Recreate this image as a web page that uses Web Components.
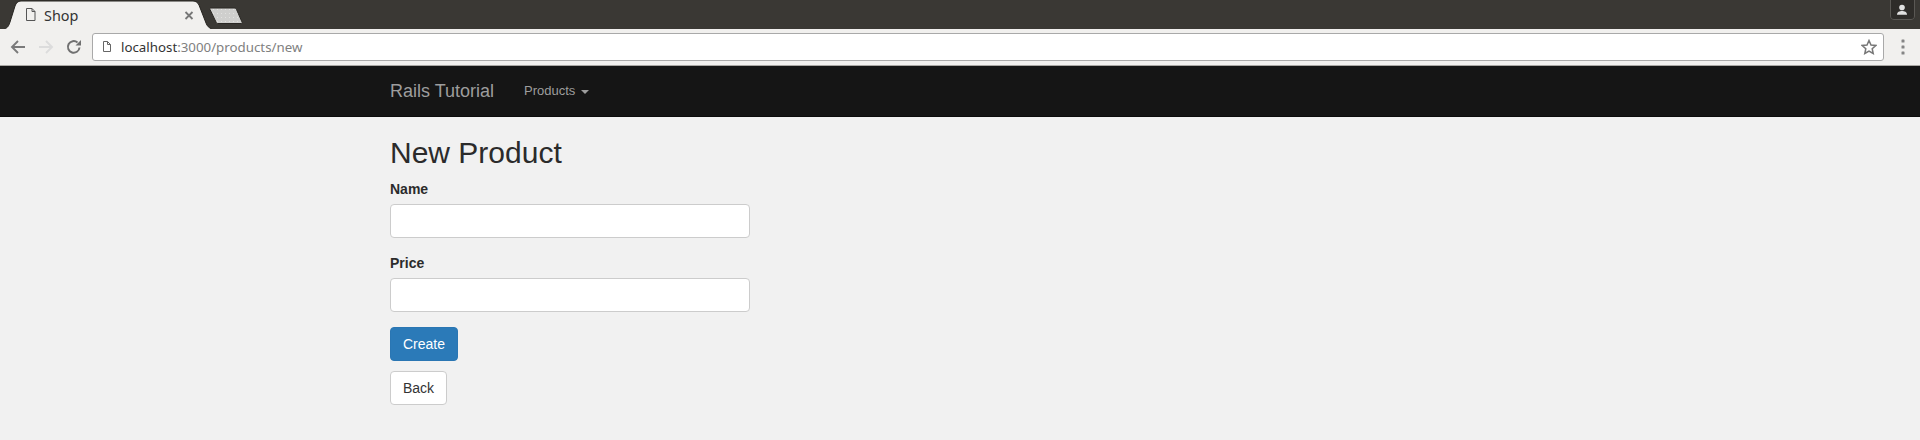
<!DOCTYPE html>
<html><head><meta charset="utf-8">
<style>
html,body{margin:0;padding:0;background:#f1f1f1;}
body{width:1920px;height:440px;overflow:hidden;font-family:"Liberation Sans",Arial,sans-serif;font-size:14px;color:#333;line-height:20px}
</style></head>
<body>
<browser-chrome></browser-chrome>
<site-navbar></site-navbar>
<product-page></product-page>
<script>
function mk(tag,html){customElements.define(tag,class extends HTMLElement{constructor(){super();this.attachShadow({mode:'open'}).innerHTML=html;}});}
mk('browser-chrome',`<style>
:host{display:block;font-family:"Noto Sans","Open Sans",sans-serif}
.tabs{height:29px;background:#3a3834;position:relative}
.tabshape{position:absolute;left:0;top:0}
.title{position:absolute;left:44px;top:5px;font:14.4px/22px "Noto Sans",sans-serif;color:#333}
.toolbar{height:37px;background:#f1f0ee;border-bottom:1px solid #a9a7a3;box-sizing:border-box;display:flex;align-items:center;padding-left:10px}
.url{margin-left:10px;width:1792px;height:28px;box-sizing:border-box;background:#fff;border:1px solid #a9a9a9;border-radius:3px;display:flex;align-items:center;padding-left:9px;font:13.3px/20px "Noto Sans",sans-serif;color:#333}
.url span{color:#808080}
.text{margin-left:9px;white-space:nowrap}
.star{margin-left:auto;margin-right:6px}
.menu{margin-left:17px}
svg{display:block;flex:none}
</style>
<div class="tabs">
<svg class="tabshape" width="250" height="29" viewBox="0 0 250 29">
<defs><pattern id="dots" width="4" height="4" patternUnits="userSpaceOnUse"><rect width="4" height="4" fill="#cfcfcd"/><rect x="1" y="1" width="1" height="1" fill="#e2e2e0"/></pattern></defs>
<path d="M4 29C8 28 9 25 10 22L15 6C16 3 18 1 21 1H193C196 1 198 3 199 5L206 23C207 26 209 28 212 29Z" fill="#f1f0ee"/>
<path d="M4 29C8 28 9 25 10 22L15 6C16 3 18 1 21 1H193C196 1 198 3 199 5L206 23C207 26 209 28 212 29" fill="none" stroke="#25231f"/>
<path d="M211 8H234C235.500 8 236 8.500 236.500 9.500L242 22C242.500 23 242 23.500 241 23.500H218C217 23.500 216.500 23 216 22L210 9.500C209.500 8.500 210 8 211 8Z" fill="url(#dots)" stroke="#2a2824"/>
<path d="M26.500 8.500h5.500l3 3v9h-8.500zM32 8.500v3h3" fill="none" stroke="#555"/>
<path d="M185.500 12l7 7M192.500 12l-7 7" stroke="#777" stroke-width="1.800" fill="none"/>
</svg>
<span class="title">Shop</span>
<svg style="position:absolute;left:1890px;top:0" width="25" height="20" viewBox="0 0 25 20">
<path d="M.5 0V16C.5 18 2 19.500 4 19.500H21C23 19.500 24.500 18 24.500 16V0" fill="#2e2c29" stroke="#5a5854"/>
<circle cx="12" cy="7.500" r="2.800" fill="#e0e0e0"/><path d="M7 14.800c0-3 2.500-3.800 5-3.800s5 .8 5 3.800z" fill="#e0e0e0"/>
</svg>
</div>
<div class="toolbar">
<svg width="16" height="16" viewBox="0 0 16 16"><path d="M15 8H2M8 2L2 8l6 6" fill="none" stroke="#7a7a7a" stroke-width="1.900"/></svg>
<svg style="margin-left:12px" width="16" height="16" viewBox="0 0 16 16"><path d="M1 8H14M8 2l6 6-6 6" fill="none" stroke="#dcdcdc" stroke-width="1.900"/></svg>
<svg style="margin-left:12px" width="16" height="16" viewBox="0 0 16 16"><path d="M13.500 8.500A5.800 5.800 0 1 1 11.500 3.500" fill="none" stroke="#707070" stroke-width="2"/><path d="M9.500 6.500H15V1z" fill="#707070"/></svg>
<div class="url">
<svg width="10" height="12" viewBox="0 0 10 12"><path d="M1.500 .5h4l3 3v7h-7zM5.500 .5v3h3" fill="none" stroke="#666"/></svg>
<div class="text">localhost<span>:3000/products/new</span></div>
<svg class="star" width="16" height="16" viewBox="0 0 16 16"><path d="M8 1.500l2 4.500 4.800.500-3.600 3.200 1 4.800L8 12l-4.200 2.500 1-4.800L1.200 6.500 6 6z" fill="none" stroke="#777" stroke-width="1.500"/></svg>
</div>
<svg class="menu" width="4" height="16" viewBox="0 0 4 16"><rect x="0.500" y="0.500" width="3" height="3" rx=".6" fill="#858585"/><rect x="0.500" y="6.500" width="3" height="3" rx=".6" fill="#858585"/><rect x="0.500" y="12.500" width="3" height="3" rx=".6" fill="#858585"/></svg>
</div>`);
mk('site-navbar',`<style>
:host{display:block;height:51px;box-sizing:border-box;background:#151515;border-bottom:1px solid #0c0c0c;padding-left:390px;font-family:"Liberation Sans",Arial,sans-serif}
.in{display:flex;height:50px;align-items:center}
.brand{font-size:18px;line-height:20px;color:#9d9d9d}
.item{margin-left:30px;font-size:13px;line-height:20px;color:#9d9d9d;display:flex;align-items:center}
.caret{display:inline-block;width:0;height:0;margin-left:6px;margin-top:2px;border-top:4px solid #9d9d9d;border-left:4px solid transparent;border-right:4px solid transparent}
</style><div class="in"><span class="brand">Rails Tutorial</span><span class="item">Products<i class="caret"></i></span></div>`);
mk('form-field',`<style>
:host{display:block;margin-bottom:15px}
label{display:block;font-weight:700;font-size:14px;line-height:20px;margin-bottom:5px;color:#2b2b2b}
.in{display:block;box-sizing:border-box;width:360px;height:34px;background:#fff;border:1px solid #ccc;border-radius:4px}
</style><label><slot></slot></label><div class="in"></div>`);
mk('ui-button',`<style>
:host{display:block;width:max-content;box-sizing:border-box;padding:6px 12px;font-size:14px;line-height:20px;border:1px solid #ccc;border-radius:4px;background:#fff;color:#333}
:host([primary]){background:#2b7ab8;border-color:#2a76b3;color:#fff}
</style><slot></slot>`);
mk('product-page',`<style>
:host{display:block;padding-left:390px;font-family:"Liberation Sans",Arial,sans-serif;color:#2b2b2b}
h1{margin:19px 0 10px;font-size:30px;line-height:33px;font-weight:500}
ui-button[primary]{margin-bottom:10px}
</style>
<h1>New Product</h1>
<form-field>Name</form-field>
<form-field>Price</form-field>
<ui-button primary>Create</ui-button>
<ui-button>Back</ui-button>`);
</script>
</body></html>
